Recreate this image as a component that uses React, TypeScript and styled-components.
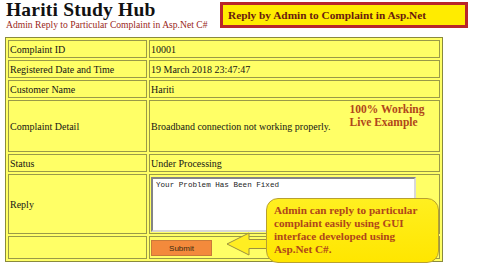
import styled, { createGlobalStyle } from "styled-components";

const GlobalStyle = createGlobalStyle`
  html, body {
    margin: 0;
    padding: 0;
    background: #ffffff;
  }
  body {
    width: 480px;
    height: 270px;
    overflow: hidden;
    font-family: "Liberation Serif", "Times New Roman", serif;
  }
`;

const serif = `"Liberation Serif", "Times New Roman", serif`;

const Page = styled.div`
  position: relative;
  width: 480px;
  height: 270px;
  font-family: ${serif};
`;

const Header = styled.div`
  display: flex;
  align-items: flex-start;
  justify-content: space-between;
  height: 37px;
  padding: 0 12px 0 6px;
  box-sizing: border-box;
`;

const Brand = styled.div`
  display: flex;
  flex-direction: column;
`;

const Title = styled.span`
  font-family: ${serif};
  font-size: 19.5px;
  font-weight: 700;
  color: #111;
  line-height: 18px;
  margin-top: 1px;
  letter-spacing: 0.2px;
`;

const Subtitle = styled.span`
  font-family: ${serif};
  font-size: 9.6px;
  color: #9a1f1a;
  line-height: 11px;
`;

const Banner = styled.div`
  width: 248px;
  height: 26px;
  margin-top: 2px;
  box-sizing: border-box;
  border: 3px solid #b8262a;
  background: #ffec00;
  display: flex;
  align-items: center;
  padding-left: 5px;
  font-family: ${serif};
  font-size: 11.3px;
  font-weight: 700;
  color: #6a1a0e;
`;

const Table = styled.table`
  margin-left: 5px;
  width: 438px;
  table-layout: fixed;
  border: 1px solid #8a8a3c;
  border-spacing: 2px;
  background: #ffff66;
  font-family: ${serif};
`;

const Row = styled.tr<{ $h: number }>`
  height: ${(p) => p.$h}px;
`;

const Cell = styled.td`
  border: 1px solid #9a9a48;
  padding: 0 1px;
  font-family: ${serif};
  font-size: 10px;
  color: #151515;
  vertical-align: middle;
  white-space: nowrap;
`;

const DetailCell = styled.div`
  display: flex;
  align-items: center;
`;

const Working = styled.div`
  display: flex;
  flex-direction: column;
  margin-left: 19px;
  margin-top: -21px;
  font-family: ${serif};
  font-size: 11.5px;
  font-weight: 700;
  color: #b0461a;
  line-height: 13px;
`;

const ReplyBox = styled.textarea`
  display: block;
  width: 265px;
  height: 55px;
  box-sizing: border-box;
  margin: 0;
  resize: none;
  border: 2px inset #d8d8d8;
  background: #fff;
  padding: 2px 3px;
  font-family: "Liberation Mono", "Courier New", monospace;
  font-size: 7.6px;
  color: #222;
`;

const SubmitButton = styled.button`
  width: 61px;
  height: 16px;
  margin-top: 1px;
  background: #f38a3c;
  border: 1px solid #c87a3a;
  font-family: "Liberation Sans", Arial, sans-serif;
  font-size: 8px;
  color: #3a2a10;
  padding: 0;
`;

const Callout = styled.div`
  position: absolute;
  left: 226px;
  top: 198px;
  width: 214px;
  height: 66px;
`;

const Bubble = styled.div`
  position: absolute;
  left: 40px;
  top: 0;
  width: 173px;
  height: 65px;
  box-sizing: border-box;
  border: 1px solid #b8a030;
  border-radius: 12px;
  background: linear-gradient(#ffef20, #ffe600);
  padding: 5px 0 0 7px;
  font-family: ${serif};
  font-size: 11.2px;
  font-weight: 700;
  color: #b0461a;
  line-height: 13px;
`;

const Arrow = styled.svg`
  position: absolute;
  left: 0;
  top: 33px;
`;

export default function App() {
  return (
    <Page>
      <GlobalStyle />
      <Header>
        <Brand>
          <Title>Hariti Study Hub</Title>
          <Subtitle>Admin Reply to Particular Complaint in Asp.Net C#</Subtitle>
        </Brand>
        <Banner>Reply by Admin to Complaint in Asp.Net</Banner>
      </Header>
      <Table>
        <colgroup>
          <col style={{ width: 139 }} />
          <col />
        </colgroup>
        <tbody>
          <Row $h={18}>
            <Cell>Complaint ID</Cell>
            <Cell>10001</Cell>
          </Row>
          <Row $h={18}>
            <Cell>Registered Date and Time</Cell>
            <Cell>19 March 2018 23:47:47</Cell>
          </Row>
          <Row $h={18}>
            <Cell>Customer Name</Cell>
            <Cell>Hariti</Cell>
          </Row>
          <Row $h={52}>
            <Cell>Complaint Detail</Cell>
            <Cell>
              <DetailCell>
                <span>Broadband connection not working properly.</span>
                <Working>
                  <span>100% Working</span>
                  <span>Live Example</span>
                </Working>
              </DetailCell>
            </Cell>
          </Row>
          <Row $h={18}>
            <Cell>Status</Cell>
            <Cell>Under Processing</Cell>
          </Row>
          <Row $h={60}>
            <Cell>Reply</Cell>
            <Cell>
              <ReplyBox defaultValue="Your Problem Has Been Fixed" />
            </Cell>
          </Row>
          <Row $h={23}>
            <Cell></Cell>
            <Cell>
              <SubmitButton>Submit</SubmitButton>
            </Cell>
          </Row>
        </tbody>
      </Table>
      <Callout>
        <Arrow width="42" height="26" viewBox="0 0 42 26">
          <path
            d="M1 13 L23 2 L23 8.5 L41 8.5 L41 17.5 L23 17.5 L23 24 Z"
            fill="#ffee22"
            stroke="#9c9040"
            strokeWidth="1"
          />
        </Arrow>
        <Bubble>
          Admin can reply to particular
          <br />
          complaint easily using GUI
          <br />
          interface developed using
          <br />
          Asp.Net C#.
        </Bubble>
      </Callout>
    </Page>
  );
}
